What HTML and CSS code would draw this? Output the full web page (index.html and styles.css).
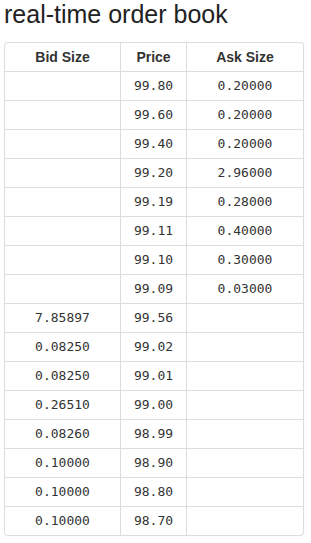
FILE: index.html
```html
<!DOCTYPE html>
<html>
<head>
<meta charset="utf-8">
<link rel="stylesheet" href="styles.css">
</head>
<body>
<h1 class="title">real-time order book</h1>
<table class="book">
  <thead>
    <tr><th class="c1">Bid Size</th><th class="c2">Price</th><th class="c3">Ask Size</th></tr>
  </thead>
  <tbody>
    <tr><td></td><td>99.80</td><td>0.20000</td></tr>
    <tr><td></td><td>99.60</td><td>0.20000</td></tr>
    <tr><td></td><td>99.40</td><td>0.20000</td></tr>
    <tr><td></td><td>99.20</td><td>2.96000</td></tr>
    <tr><td></td><td>99.19</td><td>0.28000</td></tr>
    <tr><td></td><td>99.11</td><td>0.40000</td></tr>
    <tr><td></td><td>99.10</td><td>0.30000</td></tr>
    <tr><td></td><td>99.09</td><td>0.03000</td></tr>
    <tr><td>7.85897</td><td>99.56</td><td></td></tr>
    <tr><td>0.08250</td><td>99.02</td><td></td></tr>
    <tr><td>0.08250</td><td>99.01</td><td></td></tr>
    <tr><td>0.26510</td><td>99.00</td><td></td></tr>
    <tr><td>0.08260</td><td>98.99</td><td></td></tr>
    <tr><td>0.10000</td><td>98.90</td><td></td></tr>
    <tr><td>0.10000</td><td>98.80</td><td></td></tr>
    <tr><td>0.10000</td><td>98.70</td><td></td></tr>
  </tbody>
</table>
</body>
</html>
```
FILE: styles.css
```css
html, body {
  margin: 0;
  padding: 0;
  background: #fff;
}
body {
  padding: 0 4px;
  font-family: "Liberation Sans", Arial, sans-serif;
  color: #333;
}
.title {
  margin: 0;
  font-size: 25px;
  font-weight: normal;
  line-height: 28px;
  height: 42px;
  color: #222;
}
.book {
  width: 300px;
  border-collapse: separate;
  border-spacing: 0;
  border: 1px solid #ddd;
  border-left: 0;
  border-radius: 4px;
  table-layout: fixed;
}
.book th, .book td {
  padding: 4px 5px;
  line-height: 20px;
  text-align: center;
  border-left: 1px solid #ddd;
  border-top: 1px solid #ddd;
  height: 20px;
}
.book thead th {
  border-top: 0;
  font-weight: bold;
  font-size: 14px;
  color: #333;
}
.book td {
  font-family: "DejaVu Sans Mono", "Liberation Mono", monospace;
  font-size: 13px;
  color: #333;
}
.c1 { width: 105px; }
.c2 { width: 55px; }
.c3 { width: auto; }
.book thead tr:first-child th:first-child { border-top-left-radius: 4px; }
.book thead tr:first-child th:last-child { border-top-right-radius: 4px; }
.book tbody tr:last-child td:first-child { border-bottom-left-radius: 4px; }
.book tbody tr:last-child td:last-child { border-bottom-right-radius: 4px; }
```
